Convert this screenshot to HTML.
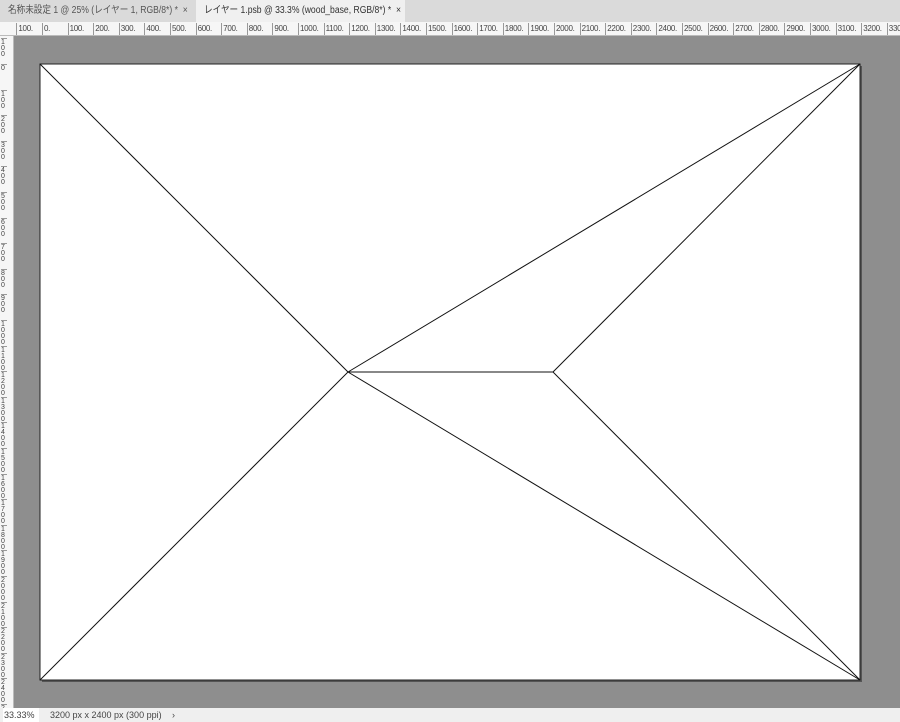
<!DOCTYPE html>
<html><head><meta charset="utf-8"><style>
*{margin:0;padding:0;box-sizing:border-box}
body{width:900px;height:722px;overflow:hidden;background:#8e8e8e;font-family:"Liberation Sans","Noto Sans CJK JP",sans-serif;position:relative}
#tabs{position:absolute;left:0;top:0;width:900px;height:22px;background:#dadada;font-size:10px;color:#555;white-space:nowrap}
.tab{position:absolute;top:0;height:22px;line-height:22px;padding-left:8px;overflow:hidden;white-space:nowrap}
.tab span{display:inline-block;transform:scaleX(0.86);transform-origin:left center}
#hr{position:absolute;left:0;top:22px;width:900px;height:14px;background:#f6f6f6;border-bottom:1px solid #bbb;font-size:8px;color:#444;overflow:hidden;white-space:nowrap;letter-spacing:-0.3px}
#vr{position:absolute;left:0;top:36px;width:14px;height:672px;background:#f6f6f6;border-right:1px solid #bbb;font-size:7px;color:#444;overflow:hidden}
.hl{position:absolute;top:1px;border-left:1px solid #999;padding-left:1px;height:13px;line-height:12px}
.vl{position:absolute;left:1px;border-top:1px solid #999;line-height:6px;padding-top:1px;word-break:break-all;width:6px}
#st{position:absolute;left:0;top:708px;width:900px;height:14px;background:#efefef;font-size:9px;color:#444;line-height:14px;white-space:nowrap}
</style></head><body>
<div id="tabs">
<div class="tab" style="left:0;width:196px"><span>名称未設定 1 @ 25% (レイヤー 1, RGB/8*) * &nbsp;×</span></div>
<div class="tab" style="left:196px;width:209px;background:#f0f0f0;color:#333"><span>レイヤー 1.psb @ 33.3% (wood_base, RGB/8*) * &nbsp;×</span></div>
</div>
<div id="hr"></div>
<div id="vr"></div>
<svg style="position:absolute;left:0;top:0" width="900" height="722">
<rect x="42" y="66" width="820" height="616" fill="#555"/>
<rect x="40" y="64" width="820" height="616" fill="#fff" stroke="#222" stroke-width="1"/>
<g stroke="#111" stroke-width="1" fill="none">
<line x1="40" y1="64" x2="348" y2="372"/>
<line x1="348" y1="372" x2="40" y2="680"/>
<line x1="348" y1="372" x2="860" y2="64"/>
<line x1="348" y1="372" x2="860" y2="680"/>
<line x1="348" y1="372" x2="553" y2="372"/>
<line x1="553" y1="372" x2="860" y2="64"/>
<line x1="553" y1="372" x2="860" y2="680"/>
</g>
</svg>
<div id="st"><span style="position:absolute;left:3px;background:#fff;padding:0 4px 0 1px">33.33%</span><span style="position:absolute;left:50px">3200 px x 2400 px (300 ppi)</span><span style="position:absolute;left:172px">›</span></div>
<script>
var hr=document.getElementById('hr'),h='';
for(var i=-1;i<=33;i++){var x=42+i*25.6;h+='<span class="hl" style="left:'+x.toFixed(1)+'px">'+Math.abs(i*100)+'.</span>';}
hr.innerHTML=h;
var vr=document.getElementById('vr'),v='';
for(var i=-1;i<=25;i++){var y=28+i*25.6;v+='<span class="vl" style="top:'+y.toFixed(1)+'px">'+Math.abs(i*100)+'</span>';}
vr.innerHTML=v;
</script>
</body></html>
